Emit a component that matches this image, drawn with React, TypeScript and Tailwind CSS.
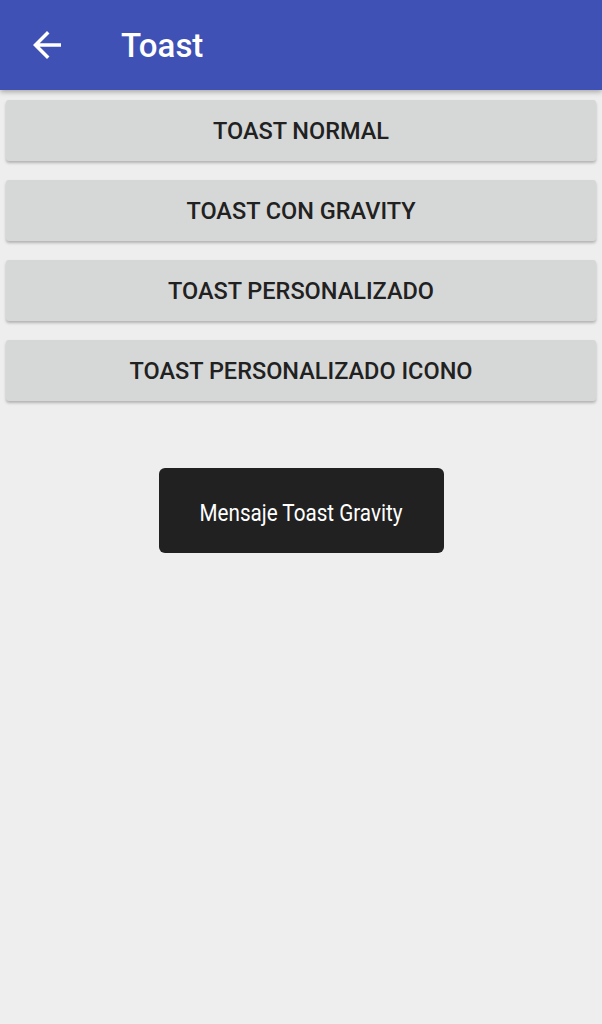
import React from "react";

const labels = ["TOAST NORMAL", "TOAST CON GRAVITY", "TOAST PERSONALIZADO", "TOAST PERSONALIZADO ICONO"];

export default function App() {
  return (
    <div className="w-[602px] h-[1024px] bg-[#eeeeee] flex flex-col" style={{ fontFamily: "Roboto, 'Noto Sans', sans-serif" }}>
      <div className="h-[90px] bg-[#3f51b5] flex items-center shadow-[0_2px_5px_rgba(0,0,0,0.3)] relative z-10">
        <div className="w-[121px] pl-[26px] flex items-center">
          <svg width="42" height="42" viewBox="0 0 24 24" fill="#ffffff">
            <path d="M20 11H7.83l5.59-5.59L12 4l-8 8 8 8 1.41-1.41L7.83 13H20v-2z" />
          </svg>
        </div>
        <span className="text-white text-[33px] font-medium leading-none">Toast</span>
      </div>
      <div className="flex flex-col gap-[19px] px-[6px] pt-[10px]">
        {labels.map((l) => (
          <div
            key={l}
            className="h-[61px] pt-[2px] bg-[#d6d7d7] rounded-[3px] shadow-[0_2px_3px_rgba(0,0,0,0.25)] flex items-center justify-center text-[#212121] text-[23.5px] font-medium"
          >
            {l}
          </div>
        ))}
      </div>
      <div className="flex justify-center pt-[67px]">
        <div className="w-[285px] h-[85px] pt-[4px] bg-[#212121] rounded-[6px] flex items-center justify-center text-white text-[24px]">
          <span className="inline-block scale-x-[0.86] whitespace-nowrap">Mensaje Toast Gravity</span>
        </div>
      </div>
    </div>
  );
}
